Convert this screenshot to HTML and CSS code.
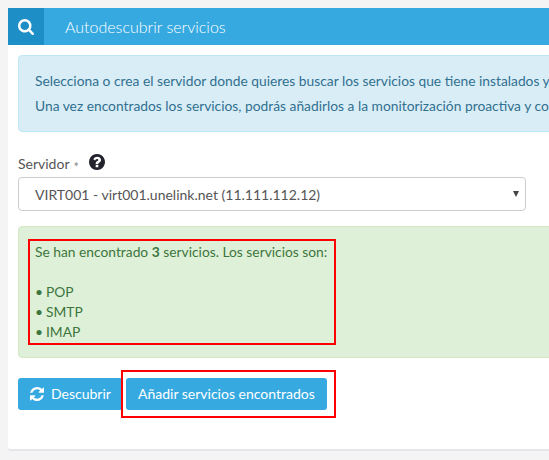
FILE: index.html
```html
<!DOCTYPE html>
<html>
<head>
    <title>Autodescubrir servicios</title>
    <link rel="stylesheet" href="styles.css">
</head>
<body>
    <div class="panel">
        <div class="panel-heading">
            <span class="panel-icon">
                <svg width="16" height="16" viewBox="0 0 1664 1664">
                    <path fill="#fff" d="M1152 704q0-185-131.500-316.500t-316.500-131.500-316.500 131.500-131.500 316.500 131.500 316.500 316.500 131.500 316.500-131.500 131.500-316.500zm512 832q0 52-38 90t-90 38q-54 0-90-38l-343-342q-179 124-399 124-143 0-273.500-55.500t-225-150-150-225-55.500-273.500 55.500-273.500 150-225 225-150 273.500-55.500 273.500 55.500 225 150 150 225 55.500 273.500q0 220-124 399l343 343q37 37 37 90z"/>
                </svg>
            </span>
            <span class="panel-title">Autodescubrir servicios</span>
        </div>
        <div class="panel-body">
            <div class="alert-info">
                <p>Selecciona o crea el servidor donde quieres buscar los servicios que tiene instalados y</p>
                <p>Una vez encontrados los servicios, podrás añadirlos a la monitorización proactiva y configurarlos</p>
            </div>

            <div class="field-label">
                <span>Servidor</span><span class="required">*</span>
                <svg class="help-icon" width="16" height="16" viewBox="0 128 1536 1536">
                    <path fill="#23232e" d="M896 1376v-192q0-14-9-23t-23-9h-192q-14 0-23 9t-9 23v192q0 14 9 23t23 9h192q14 0 23-9t9-23zm256-672q0-88-55.500-163t-138.500-116-170-41q-243 0-371 213-15 24 8 42l132 100q7 6 19 6 16 0 25-12 53-68 86-92 34-24 86-24 48 0 85.500 26t37.500 59q0 38-20 61t-68 45q-63 28-115.500 86.500t-52.500 125.500v36q0 14 9 23t23 9h192q14 0 23-9t9-23q0-19 21.500-49.500t54.500-49.500q32-18 49-28.500t46-35 44.500-48 28-60.500 12.500-81zm384 192q0 209-103 385.500t-279.500 279.500-385.500 103-385.500-103-279.500-279.500-103-385.500 103-385.500 279.500-279.500 385.500-103 385.500 103 279.500 279.500 103 385.500z"/>
                </svg>
            </div>
            <div class="select-box">
                <span>VIRT001 - virt001.unelink.net (11.111.112.12)</span>
                <span class="select-arrow"></span>
            </div>

            <div class="alert-success">
                <div class="marked">
                    <div>Se han encontrado <b>3</b> servicios. Los servicios son:</div>
                    <div class="blank"></div>
                    <div><span class="bullet">•</span>POP</div>
                    <div><span class="bullet">•</span>SMTP</div>
                    <div><span class="bullet">•</span>IMAP</div>
                </div>
            </div>

            <div class="actions">
                <button class="btn btn-discover">
                    <svg width="14" height="14" viewBox="0 0 1536 1536">
                        <path fill="#fff" d="M1511 928q0 5-1 7-64 268-268 434.500T764 1536q-146 0-282.500-55T238 1324l-129 129q-19 19-45 19t-45-19-19-45V960q0-26 19-45t45-19h448q26 0 45 19t19 45-19 45L420 1142q71 66 161 102t187 36q134 0 250-65t186-179q11-17 53-117 8-23 30-23h192q13 0 22.500 9.500t9.500 22.500zm25-800v448q0 26-19 45t-45 19h-448q-26 0-45-19t-19-45 19-45l138-138Q969 256 768 256q-134 0-250 65T332 500q-11 17-53 117-8 23-30 23H50q-13 0-22.500-9.500T18 608v-7q65-268 270-434.500T768 0q146 0 284 55.500T1297 212l130-129q19-19 45-19t45 19 19 45z"/>
                    </svg>
                    Descubrir
                </button>
                <div class="marked-btn">
                    <button class="btn">Añadir servicios encontrados</button>
                </div>
            </div>
        </div>
    </div>
</body>
</html>
```

FILE: styles.css
```css
html, body {
    height: 460px;
    overflow: hidden;
}
body {
    margin: 0;
    padding: 8px 0 0 8px;
    box-sizing: border-box;
    width: 549px;
    background: #f4f4f5;
    font-family: "Lato", "Liberation Sans", sans-serif;
    font-size: 14px;
    color: #555;
}
.panel {
    width: 640px;
    height: 443px;
    background: #fff;
    border-bottom: 2px solid #e4e6ea;
    border-radius: 3px;
    box-sizing: border-box;
}
.panel-heading {
    display: flex;
    align-items: center;
    height: 37px;
    background: #36a9e1;
    color: #fff;
}
.panel-icon {
    display: flex;
    align-items: center;
    justify-content: center;
    width: 36px;
    height: 37px;
    background: #1e8fc6;
}
.panel-title {
    margin: -1px 0 0 21px;
    font-size: 16px;
    font-weight: 300;
}
.panel-body {
    padding: 10px 10px 0;
}
.alert-info {
    height: 77px;
    box-sizing: border-box;
    padding: 15px 16px;
    background: #d9edf7;
    border: 1px solid #bce8f1;
    border-radius: 4px;
    color: #31708f;
    font-size: 13.8px;
    white-space: nowrap;
}
.alert-info p {
    margin: 0 0 5px;
    line-height: 20px;
}
.field-label {
    display: flex;
    align-items: center;
    margin-top: 18px;
    height: 26px;
}
.required {
    margin: 7px 0 0 4px;
    color: #888;
    font-size: 13px;
}
.help-icon {
    margin: -3px 0 0 10px;
}
.select-box {
    display: flex;
    align-items: center;
    justify-content: space-between;
    width: 508px;
    height: 34px;
    margin-top: 1px;
    padding: 0 6px 0 16px;
    box-sizing: border-box;
    background: #fff;
    border: 1px solid #ccc;
    border-radius: 4px;
    color: #555;
}
.select-arrow {
    width: 0;
    height: 0;
    border-left: 3px solid transparent;
    border-right: 3px solid transparent;
    border-top: 6px solid #444;
}
.alert-success {
    margin-top: 15px;
    height: 132px;
    box-sizing: border-box;
    padding: 12px 9px;
    background: #dff0d8;
    border: 1px solid #d6e9c6;
    border-radius: 4px;
    color: #3c763d;
    font-size: 13.8px;
}
.marked {
    width: 308px;
    height: 106px;
    box-sizing: border-box;
    padding: 1px 5px;
    border: 2px solid #f00;
    line-height: 20px;
    white-space: nowrap;
}
.blank {
    height: 20px;
}
.bullet {
    display: inline-block;
    width: 11px;
}
.actions {
    display: flex;
    align-items: center;
    margin-top: 12px;
}
.btn {
    display: flex;
    align-items: center;
    gap: 7px;
    height: 32px;
    padding: 0 12px 1px;
    background: #36a9e1;
    border: 0;
    border-radius: 3px;
    color: #fff;
    font-family: inherit;
    font-size: 14px;
}
.btn-discover {
    width: 105px;
}
.marked-btn {
    padding: 6px 7px 6px 3px;
    margin-left: -2px;
    border: 2px solid #f00;
}
```
